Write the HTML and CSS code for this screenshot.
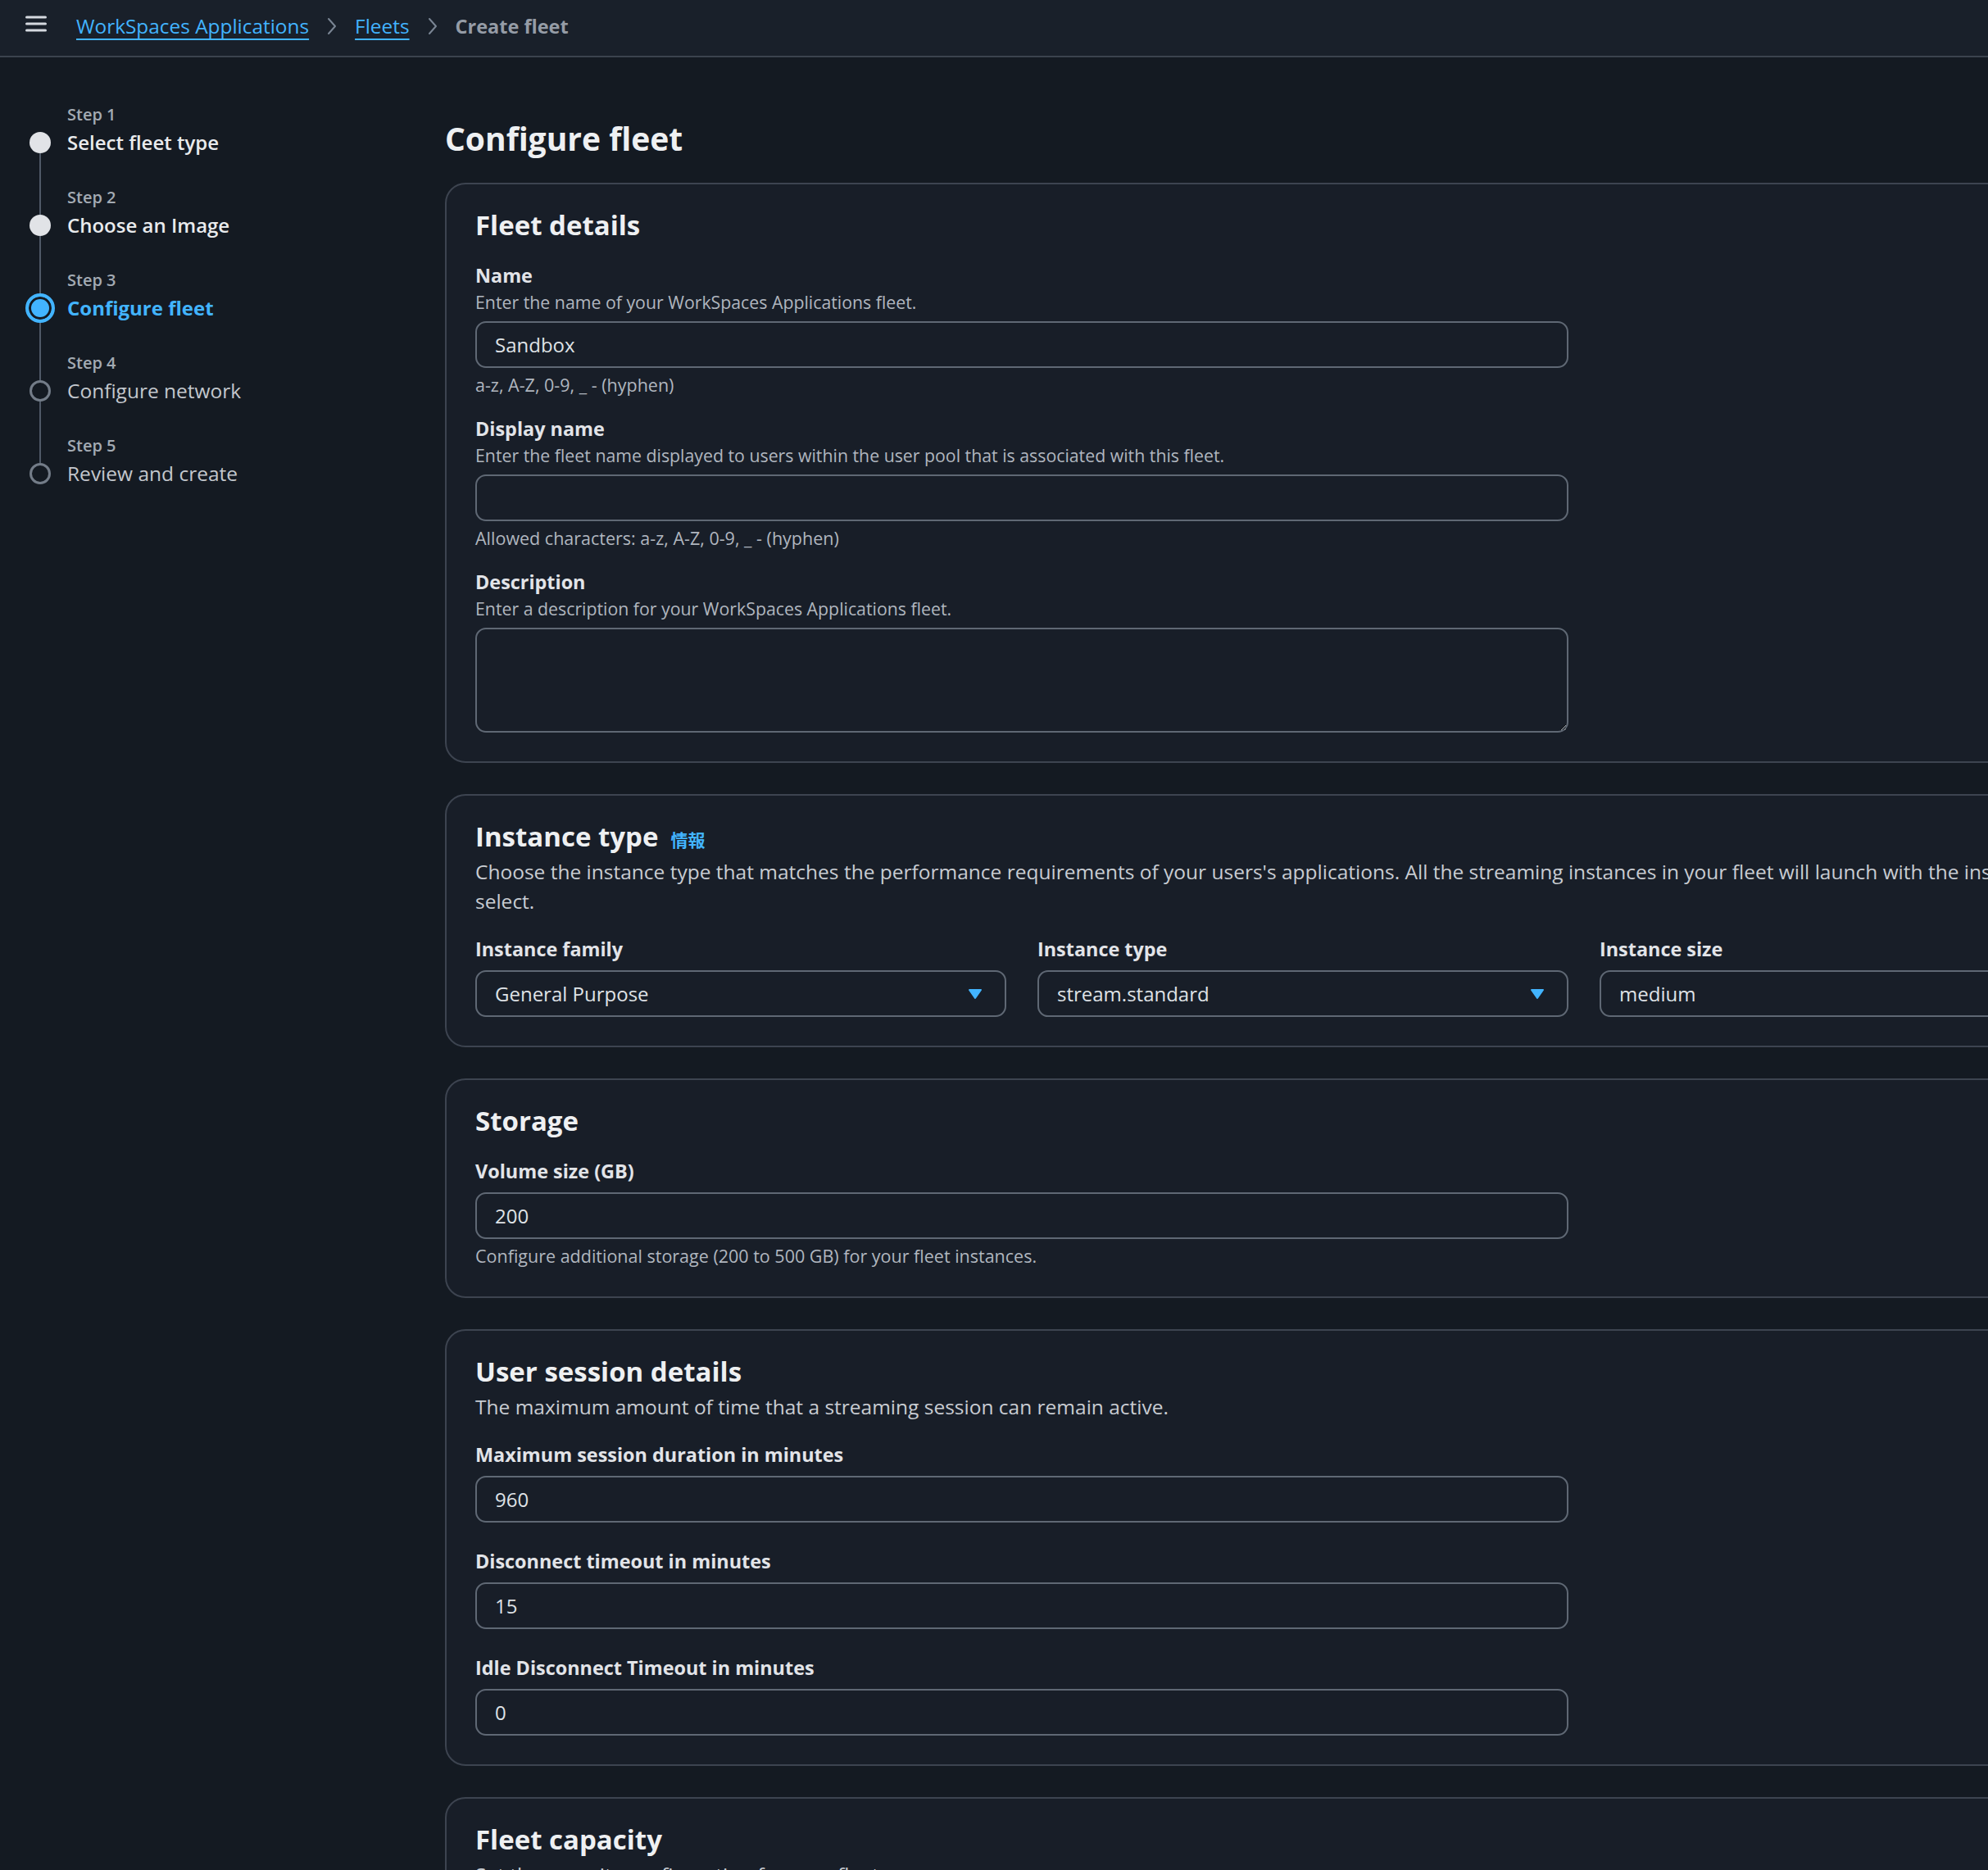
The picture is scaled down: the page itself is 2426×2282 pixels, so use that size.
FILE: index.html
```html
<!DOCTYPE html>
<html lang="en">
<head>
  <meta charset="UTF-8" />
  <meta name="viewport" content="width=device-width, initial-scale=1.0"/>
  <title>Create fleet</title>
  <link rel="stylesheet" href="styles.css">
</head>
<body>
  <header class="topbar">
    <button class="menu-btn" aria-label="Open navigation">
      <svg width="26" height="20" viewBox="0 0 26 20">
        <rect x="0" y="0.5" width="26" height="3" rx="1.5" />
        <rect x="0" y="8.5" width="26" height="3" rx="1.5" />
        <rect x="0" y="16.5" width="26" height="3" rx="1.5" />
      </svg>
    </button>
    <nav class="breadcrumbs">
      <a href="#">WorkSpaces Applications</a>
      <svg class="crumb-sep" width="14" height="22" viewBox="0 0 14 22"><polyline points="3,2 11,11 3,20" /></svg>
      <a href="#">Fleets</a>
      <svg class="crumb-sep" width="14" height="22" viewBox="0 0 14 22"><polyline points="3,2 11,11 3,20" /></svg>
      <span class="crumb-current">Create fleet</span>
    </nav>
  </header>

  <div class="layout">
    <aside class="wizard-nav">
      <ol class="steps">
        <li class="step done">
          <span class="step-num">Step 1</span>
          <span class="marker"><span class="dot"></span></span>
          <span class="step-title">Select fleet type</span>
        </li>
        <li class="step done">
          <span class="step-num">Step 2</span>
          <span class="marker"><span class="dot"></span></span>
          <span class="step-title">Choose an Image</span>
        </li>
        <li class="step current">
          <span class="step-num">Step 3</span>
          <span class="marker"><span class="dot"></span></span>
          <span class="step-title">Configure fleet</span>
        </li>
        <li class="step todo">
          <span class="step-num">Step 4</span>
          <span class="marker"><span class="dot"></span></span>
          <span class="step-title">Configure network</span>
        </li>
        <li class="step todo">
          <span class="step-num">Step 5</span>
          <span class="marker"><span class="dot"></span></span>
          <span class="step-title">Review and create</span>
        </li>
      </ol>
    </aside>

    <main class="content">
      <h1>Configure fleet</h1>

      <section class="card">
        <h2>Fleet details</h2>
        <div class="fields">
          <div class="field constrained">
            <label class="field-label" for="name">Name</label>
            <div class="hint">Enter the name of your WorkSpaces Applications fleet.</div>
            <input class="input control" id="name" type="text" value="Sandbox" />
            <div class="constraint">a-z, A-Z, 0-9, _ - (hyphen)</div>
          </div>
          <div class="field constrained">
            <label class="field-label" for="display">Display name</label>
            <div class="hint">Enter the fleet name displayed to users within the user pool that is associated with this fleet.</div>
            <input class="input control" id="display" type="text" value="" />
            <div class="constraint">Allowed characters: a-z, A-Z, 0-9, _ - (hyphen)</div>
          </div>
          <div class="field">
            <label class="field-label" for="desc">Description</label>
            <div class="hint">Enter a description for your WorkSpaces Applications fleet.</div>
            <textarea class="input textarea control" id="desc"></textarea>
          </div>
        </div>
      </section>

      <section class="card">
        <div class="card-head">
          <h2>Instance type</h2>
          <a class="info" href="#">情報</a>
        </div>
        <p class="card-desc">Choose the instance type that matches the performance requirements of your users's applications. All the streaming instances in your fleet will launch with the instance type that you<br>select.</p>
        <div class="fields columns">
          <div class="field">
            <div class="field-label">Instance family</div>
            <button class="select control">
              <span>General Purpose</span>
              <svg width="18" height="14" viewBox="0 0 18 14"><path d="M2 2 H16 L9 12 Z" /></svg>
            </button>
          </div>
          <div class="field">
            <div class="field-label">Instance type</div>
            <button class="select control">
              <span>stream.standard</span>
              <svg width="18" height="14" viewBox="0 0 18 14"><path d="M2 2 H16 L9 12 Z" /></svg>
            </button>
          </div>
          <div class="field">
            <div class="field-label">Instance size</div>
            <button class="select control">
              <span>medium</span>
              <svg width="18" height="14" viewBox="0 0 18 14"><path d="M2 2 H16 L9 12 Z" /></svg>
            </button>
          </div>
        </div>
      </section>

      <section class="card">
        <h2>Storage</h2>
        <div class="fields">
          <div class="field">
            <label class="field-label" for="volume">Volume size (GB)</label>
            <input class="input control" id="volume" type="text" value="200" />
            <div class="constraint">Configure additional storage (200 to 500 GB) for your fleet instances.</div>
          </div>
        </div>
      </section>

      <section class="card">
        <h2>User session details</h2>
        <p class="card-desc">The maximum amount of time that a streaming session can remain active.</p>
        <div class="fields">
          <div class="field">
            <label class="field-label" for="maxdur">Maximum session duration in minutes</label>
            <input class="input control" id="maxdur" type="text" value="960" />
          </div>
          <div class="field">
            <label class="field-label" for="disc">Disconnect timeout in minutes</label>
            <input class="input control" id="disc" type="text" value="15" />
          </div>
          <div class="field">
            <label class="field-label" for="idle">Idle Disconnect Timeout in minutes</label>
            <input class="input control" id="idle" type="text" value="0" />
          </div>
        </div>
      </section>

      <section class="card">
        <h2>Fleet capacity</h2>
        <p class="card-desc">Set the capacity configuration for your fleet.</p>
      </section>
    </main>
  </div>
</body>
</html>
```

FILE: styles.css
```css
html, body {
  margin: 0;
  overflow: hidden;
}

body {
  font-family: "Open Sans", "Noto Sans", sans-serif;
  background: #141a22;
  color: #dcdfe4;
  color-scheme: dark;
}

/* Top bar */
.topbar {
  display: flex;
  align-items: center;
  height: 63px;
  padding: 0 0 5px 31px;
  background: #19202a;
  border-bottom: 2px solid #3b434e;
}

.menu-btn {
  background: none;
  border: 0;
  padding: 0;
  margin: 0 36px 6px 0;
  display: flex;
  cursor: pointer;
}

.menu-btn rect {
  fill: #d5d9df;
}

.breadcrumbs {
  display: flex;
  align-items: center;
  font-size: 24.4px;
}

.breadcrumbs a {
  color: #42b4ff;
  text-decoration: underline;
  text-decoration-thickness: 2px;
  text-underline-offset: 6px;
}

.crumb-sep {
  margin: 0 21px;
}

.crumb-sep polyline {
  fill: none;
  stroke: #7a8594;
  stroke-width: 2;
  stroke-linecap: round;
  stroke-linejoin: round;
}

.crumb-current {
  color: #959ca6;
  font-weight: 700;
  font-size: 23.5px;
}

/* Layout */
.layout {
  display: grid;
  grid-template-columns: 543px 2097px;
}

/* Wizard steps */
.wizard-nav {
  padding: 56px 0 0 31px;
}

.steps {
  list-style: none;
  margin: 0;
  padding: 0;
}

.step {
  display: grid;
  grid-template-columns: 36px auto;
  grid-template-rows: 28px 40px;
  grid-template-areas: ". num" "marker title";
  column-gap: 15px;
}

.step + .step {
  margin-top: 33px;
}

.step-num {
  grid-area: num;
  font-size: 20px;
  line-height: 28px;
  font-weight: 600;
  color: #a3aab3;
}

.step-title {
  grid-area: title;
  font-size: 24.5px;
  line-height: 40px;
  white-space: nowrap;
}

.done .step-title {
  color: #e9ebed;
  font-weight: 600;
  font-size: 24px;
}

.current .step-title {
  color: #42b4ff;
  font-weight: 700;
  font-size: 24px;
}

.todo .step-title {
  color: #c3c7cd;
}

.marker {
  grid-area: marker;
  position: relative;
  display: flex;
  align-items: center;
  justify-content: center;
}

.marker::after {
  content: "";
  position: absolute;
  left: 17px;
  top: 33px;
  width: 2px;
  height: 75px;
  background: #4f5967;
}

.step:last-child .marker::after {
  display: none;
}

.dot {
  position: relative;
  z-index: 1;
  width: 26px;
  height: 26px;
  box-sizing: border-box;
  border-radius: 50%;
  background: #141a22;
}

.done .dot {
  background: #e1e3e7;
}

.todo .dot {
  border: 3px solid #737c88;
}

.current .dot {
  width: 36px;
  height: 36px;
  border: 4px solid #42b4ff;
  background: #42b4ff;
  box-shadow: inset 0 0 0 3px #141a22;
}

/* Main content */
.content {
  padding-top: 75px;
}

h1 {
  margin: 0 0 30px;
  font-size: 39px;
  line-height: 48px;
  font-weight: 700;
  color: #eef0f2;
}

.card {
  background: #181e28;
  border: 2px solid #3d4450;
  border-radius: 25px;
  padding: 30px 35px 35px;
}

.card + .card {
  margin-top: 38px;
}

.card h2 {
  margin: 0;
  font-size: 33px;
  line-height: 40px;
  font-weight: 700;
  color: #eef0f2;
}

.card-head {
  display: flex;
  align-items: baseline;
  gap: 15px;
}

.info {
  font-family: "Noto Sans CJK JP", "Noto Sans", sans-serif;
  font-size: 21px;
  font-weight: 700;
  color: #42b4ff;
  text-decoration: none;
}

.card-desc {
  margin: 5px 0 0;
  font-size: 24.5px;
  line-height: 36px;
  color: #c8ccd2;
  white-space: nowrap;
}

.fields {
  margin-top: 26px;
}

.card-desc + .fields {
  margin-top: 25px;
}

.field {
  max-width: 1334px;
}

.field + .field {
  margin-top: 32px;
}

.field.constrained + .field {
  margin-top: 24px;
}

.columns {
  display: grid;
  grid-template-columns: repeat(3, 648px);
  column-gap: 38px;
}

.columns .field + .field {
  margin-top: 0;
}

.field-label {
  display: block;
  font-size: 23.4px;
  line-height: 30px;
  font-weight: 700;
  color: #e2e4e8;
}

.hint {
  margin-top: 4px;
  font-size: 21.3px;
  line-height: 28px;
  color: #b0b6bf;
}

.control {
  margin-top: 9px;
}

.field-label + .control {
  margin-top: 11px;
}

.constraint {
  margin-top: 7px;
  font-size: 21.5px;
  line-height: 28px;
  color: #b0b6bf;
}

.input {
  display: block;
  width: 100%;
  height: 57px;
  box-sizing: border-box;
  padding: 0 22px;
  background: transparent;
  border: 2px solid #5f6874;
  border-radius: 13px;
  font-family: inherit;
  font-size: 24px;
  color: #dfe2e6;
  outline: none;
}

.textarea {
  height: 128px;
  resize: vertical;
}

.select {
  display: flex;
  align-items: center;
  justify-content: space-between;
  width: 100%;
  height: 57px;
  box-sizing: border-box;
  padding: 0 27px 0 22px;
  background: transparent;
  border: 2px solid #5f6874;
  border-radius: 13px;
  font-family: inherit;
  font-size: 24px;
  color: #dfe2e6;
  cursor: pointer;
}

.select path {
  fill: #42b4ff;
  stroke: #42b4ff;
  stroke-width: 2;
  stroke-linejoin: round;
}
```
